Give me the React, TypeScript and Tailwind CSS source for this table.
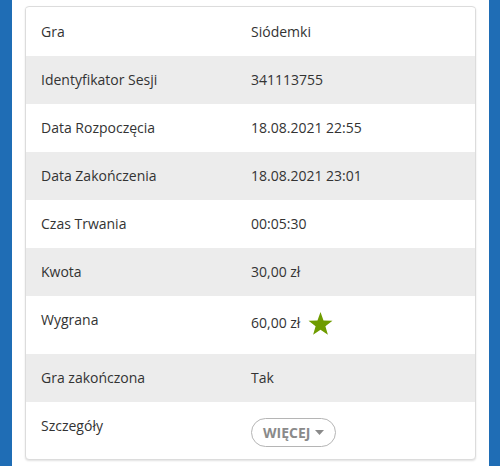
import React from "react";

const rows: { label: string; value: string; gray: boolean }[] = [
  { label: "Gra", value: "Siódemki", gray: false },
  { label: "Identyfikator Sesji", value: "341113755", gray: true },
  { label: "Data Rozpoczęcia", value: "18.08.2021 22:55", gray: false },
  { label: "Data Zakończenia", value: "18.08.2021 23:01", gray: true },
  { label: "Czas Trwania", value: "00:05:30", gray: false },
  { label: "Kwota", value: "30,00 zł", gray: true },
];

export default function App() {
  return (
    <div
      className="flex h-[466px] w-[500px] bg-white text-[14px] text-[#333]"
      style={{ fontFamily: '"Open Sans", "Noto Sans", sans-serif' }}
    >
      <div className="w-[12px] bg-[#1f6db5]" />
      <div className="flex-1 px-[13px] pt-[6px]">
        <div className="overflow-hidden rounded-[4px] border border-[#dcdcdc] bg-white pt-[1px] shadow-[0_1px_2px_rgba(0,0,0,0.12)]">
          {rows.map((r) => (
            <div
              key={r.label}
              className={`grid h-[48px] grid-cols-[210px_1fr] items-center leading-[20px] ${r.gray ? "bg-[#ececec]" : "bg-white"}`}
            >
              <div className="pl-[15px]">{r.label}</div>
              <div className="pl-[15px]">{r.value}</div>
            </div>
          ))}
          <div className="grid h-[58px] grid-cols-[210px_1fr] leading-[20px]">
            <div className="pl-[15px] pt-[14px]">Wygrana</div>
            <div className="flex items-center pl-[15px] pb-[4px]">
              <span>60,00 zł</span>
              <svg className="ml-[8px]" width="25" height="23" viewBox="0 0 24 22">
                <polygon
                  points="12,0 14.9,8.1 23.5,8.3 16.7,13.6 19.1,21.8 12,17 4.9,21.8 7.3,13.6 0.5,8.3 9.1,8.1"
                  fill="#6f9c00"
                />
              </svg>
            </div>
          </div>
          <div className="grid h-[48px] grid-cols-[210px_1fr] items-center bg-[#ececec] leading-[20px]">
            <div className="pl-[15px]">Gra zakończona</div>
            <div className="pl-[15px]">Tak</div>
          </div>
          <div className="grid h-[57px] grid-cols-[210px_1fr] leading-[20px]">
            <div className="pl-[15px] pt-[14px]">Szczegóły</div>
            <div className="pl-[15px] pt-[16px]">
              <button className="flex h-[29px] items-center gap-[5px] rounded-full border border-[#b5b5b5] bg-white px-[11px] text-[14px] font-bold text-[#8a8a8a]">
                <span>WIĘCEJ</span>
                <svg width="9" height="5" viewBox="0 0 9 5">
                  <polygon points="0,0 9,0 4.5,5" fill="#8a8a8a" />
                </svg>
              </button>
            </div>
          </div>
        </div>
      </div>
      <div className="ml-auto w-[11px] bg-[#1f6db5]" />
    </div>
  );
}
